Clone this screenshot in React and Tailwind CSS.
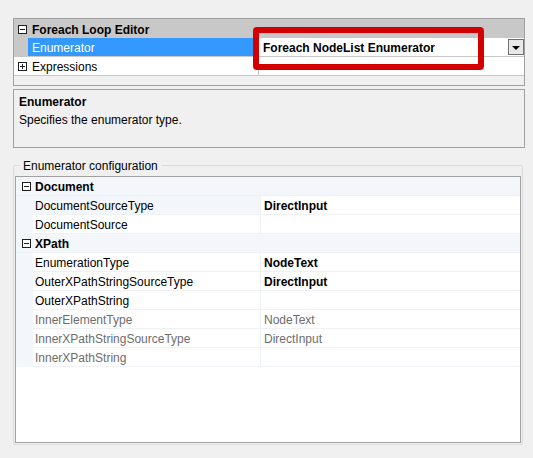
import React from "react";

function Box({ minus }) {
  return (
    <div className="w-[9px] h-[9px] border border-[#1e1e1e] bg-white relative shrink-0">
      <div className="absolute left-[1px] right-[1px] top-[3px] h-px bg-[#1e1e1e]" />
      {!minus && <div className="absolute top-[1px] bottom-[1px] left-[3px] w-px bg-[#1e1e1e]" />}
    </div>
  );
}

const rows = [
  { cat: "Document" },
  { name: "DocumentSourceType", value: "DirectInput", bold: true, sel: true },
  { name: "DocumentSource", value: "" },
  { cat: "XPath" },
  { name: "EnumerationType", value: "NodeText", bold: true },
  { name: "OuterXPathStringSourceType", value: "DirectInput", bold: true },
  { name: "OuterXPathString", value: "" },
  { name: "InnerElementType", value: "NodeText", dim: true },
  { name: "InnerXPathStringSourceType", value: "DirectInput", dim: true },
  { name: "InnerXPathString", value: "", dim: true },
];

export default function App() {
  return (
    <div className="w-[533px] h-[458px] bg-[#f0f0f0] font-['Liberation_Sans',Arial,sans-serif] text-[12px] leading-none text-black relative overflow-hidden">
      <div className="pt-[18px] pl-[13px] pr-[8px]">
        {/* top property grid */}
        <div className="border border-[#a0a0a0] h-[68px] bg-[#f0f0f0] flex flex-col">
          <div className="h-[19px] bg-[#c8c8c8] flex items-center">
            <div className="w-[14px] flex justify-center pl-[2px] pt-[1px]"><Box minus /></div>
            <span className="font-bold ml-[4px] pt-[2px]">Foreach Loop Editor</span>
          </div>
          <div className="h-[19px] bg-[#c8c8c8] flex border-b border-[#c8c8c8]">
            <div className="w-[14px]" />
            <div className="w-[230px] bg-[#3399ff] text-white flex items-center pl-[4px] pt-[2px]">Enumerator</div>
            <div className="flex-1 bg-white flex items-center pl-[4px] pt-[2px] border-l border-[#c8c8c8] relative">
              <span className="font-bold">Foreach NodeList Enumerator</span>
              <div className="absolute right-0 top-[1px] w-[16px] h-[16px] border border-[#707070] bg-[#e8e8e8] flex items-center justify-center">
                <div className="w-0 h-0 border-l-[4px] border-r-[4px] border-t-[4px] border-l-transparent border-r-transparent border-t-black mt-[1px]" />
              </div>
            </div>
          </div>
          <div className="h-[19px] bg-white flex border-b border-[#c8c8c8]">
            <div className="w-[14px] flex items-center justify-center pl-[2px]"><Box /></div>
            <div className="w-[230px] flex items-center pl-[4px] pt-[2px]">Expressions</div>
            <div className="flex-1 border-l border-[#c8c8c8]" />
          </div>
        </div>

        {/* description */}
        <div className="mt-[3px] h-[59px] border border-[#a0a0a0] bg-[#f0f0f0] pl-[5px] pt-[6px]">
          <div className="font-bold">Enumerator</div>
          <div className="mt-[6px]">Specifies the enumerator type.</div>
        </div>
      </div>

      {/* group box */}
      <div className="ml-[13px] mr-[10px] mt-[17px] h-[280px] border border-[#dcdcdc] rounded-[2px] relative pt-[10px] px-[1px] pb-[1px]">
        <div className="absolute left-[6px] top-[-6px] bg-[#f0f0f0] px-[3px]">Enumerator configuration</div>
        <div className="h-full border border-[#a0a0a0] bg-white flex flex-col">
          {rows.map((r, i) =>
            r.cat ? (
              <div key={i} className="h-[19px] bg-[#f3f6fa] flex items-center border-b border-[#eef2f7]">
                <div className="w-[17px] flex justify-center pl-[3px] pt-[1px]"><Box minus /></div>
                <span className="font-bold ml-[2px] pt-[2px]">{r.cat}</span>
              </div>
            ) : (
              <div key={i} className="h-[19px] flex">
                <div className="w-[17px] bg-[#f3f6fa]" />
                <div className={`w-[227px] flex items-center pl-[2px] pt-[2px] border-b border-[#eef2f7] ${r.sel ? "bg-[#f3f6fa]" : ""} ${r.dim ? "text-[#6d6d6d]" : ""}`}>{r.name}</div>
                <div className={`flex-1 flex items-center pl-[3px] pt-[2px] border-l border-b border-[#eef2f7] ${r.bold ? "font-bold" : ""} ${r.dim ? "text-[#6d6d6d]" : ""}`}>{r.value}</div>
              </div>
            )
          )}
        </div>
      </div>

      {/* red highlight */}
      <div className="absolute left-[253px] top-[27px] w-[231px] h-[43px] border-[6px] border-[#d40000] rounded-[4px]" />
    </div>
  );
}
